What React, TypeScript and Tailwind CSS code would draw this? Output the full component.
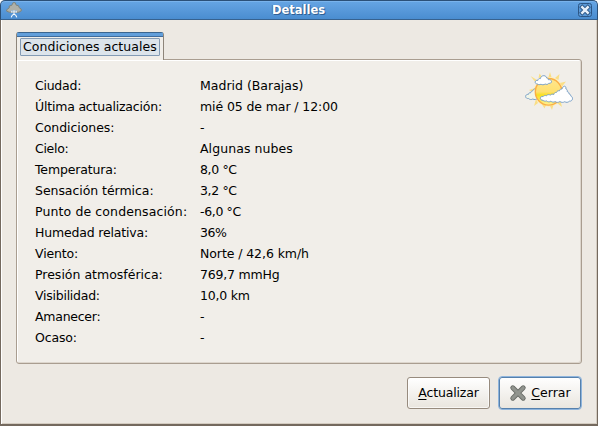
import React from "react";

type Detail = {
  label: string;
  value: string;
  labelClass?: string;
  valueClass?: string;
};

const details: Detail[] = [
  { label: "Ciudad:", value: "Madrid (Barajas)", labelClass: "tracking-[-0.25px]" },
  { label: "Última actualización:", value: "mié 05 de mar / 12:00", labelClass: "tracking-[-0.2px]", valueClass: "tracking-[-0.1px]" },
  { label: "Condiciones:", value: "-", labelClass: "tracking-[-0.05px]" },
  { label: "Cielo:", value: "Algunas nubes", labelClass: "tracking-[-0.3px]", valueClass: "tracking-[0.07px]" },
  { label: "Temperatura:", value: "8,0 °C", labelClass: "tracking-[-0.15px]", valueClass: "tracking-[-0.35px]" },
  { label: "Sensación térmica:", value: "3,2 °C", labelClass: "tracking-[-0.05px]", valueClass: "tracking-[-0.35px]" },
  { label: "Punto de condensación:", value: "-6,0 °C", labelClass: "tracking-[0.12px]", valueClass: "tracking-[-0.35px]" },
  { label: "Humedad relativa:", value: "36%", labelClass: "tracking-[-0.17px]", valueClass: "tracking-[-0.4px]" },
  { label: "Viento:", value: "Norte / 42,6 km/h", labelClass: "tracking-[-0.15px]", valueClass: "tracking-[-0.08px]" },
  { label: "Presión atmosférica:", value: "769,7 mmHg" , valueClass: "tracking-[-0.2px]" },
  { label: "Visibilidad:", value: "10,0 km", labelClass: "tracking-[-0.25px]", valueClass: "tracking-[-0.2px]" },
  { label: "Amanecer:", value: "-", labelClass: "tracking-[-0.25px]" },
  { label: "Ocaso:", value: "-", labelClass: "tracking-[-0.15px]" },
];

function AppIcon() {
  return (
    <svg width="16" height="16" viewBox="0 0 16 16" className="block">
      <path
        d="M7 .7h2.2l1 2.5 2.3.5.7 2 2 1.3v2l-2.4 1.2H3.200L.7 9.200V7.700L3.200 6V4l2.600-.7z"
        fill="#aeb0a8"
        stroke="#7e857f"
        strokeWidth="1"
      />
      <path d="M4.500 8.300h7l-1 1.900h-5z" fill="#9dbbd6" />
      <path d="M8 8.500v4M5 9.700l1.500.6M11 9.700l-1.500.6M8 12.300c-1.500.2-2.300 1.200-2.800 3M8 12.300c1.500.2 2.300 1.200 2.800 3" fill="none" stroke="#fff" strokeWidth="1.100" />
    </svg>
  );
}

function CloseGlyph() {
  return (
    <svg width="14" height="14" viewBox="0 0 14 14" className="block">
      <rect x=".5" y=".5" width="13" height="13" rx="2" fill="#5a98d6" stroke="#2c5787" />
      <path d="M4.300 4.300l5.400 5.400M9.700 4.300L4.300 9.700" stroke="#2c5787" strokeWidth="4.400" strokeLinecap="square" />
      <path d="M4.300 4.300l5.400 5.400M9.700 4.300L4.300 9.700" stroke="#e6effa" strokeWidth="2.500" strokeLinecap="square" />
    </svg>
  );
}

function WeatherIcon() {
  return (
    <svg width="48" height="38" viewBox="0 0 48 38" className="block">
      <defs>
        <linearGradient id="sun" x1="0" y1="0" x2="0" y2="1">
          <stop offset="0" stopColor="#ffe690" />
          <stop offset=".5" stopColor="#ffe070" />
          <stop offset=".62" stopColor="#f8e020" />
          <stop offset="1" stopColor="#fff29a" />
        </linearGradient>
      </defs>
      <circle cx="23.700" cy="19.700" r="15" fill="#fdf0bd" />
      <path
        d="M23.500 5l1.500-5 1.500 5zM30 6l4.500-4-1 6zM35 11l6-1.500-4 5zM12 8L5.500 4 11 11zM13.500 6l1-4.500 3 4zM9 21l-5-3 6-2zM13 31l-4 3 2-7zM21 33l-1.500 3.500-3-5zM25 34l2 4 1.500-5zM32 31l5 4-1.500-6z"
        fill="#fadf86"
      />
      <path
        d="M12 18c-1.500-1.800-3.700-1.300-4.200.8-1.500.2-2 1-2.100 2-1.500-.3-2.200.5-2.200 1.500C1.500 22.300.6 23.200.6 24.500c0 1.400 1.400 2.200 3 2 1.200 1.300 3 1.300 4.200.5 1.500 1 3.500.6 4.700-.6z"
        fill="#f2f6e8"
        stroke="#7ca2c8"
        strokeWidth="1"
      />
      <circle cx="23.600" cy="19.800" r="13.300" fill="url(#sun)" stroke="#fbae45" strokeWidth="1.400" />
      <path
        d="M12.500 12c-1.500 0-2.400-.8-2.300-2 .1-1.200 1.300-1.900 2.700-1.600.1-1.400 1.300-2.100 2.500-1.800.4-2 1.800-3 3.500-2.900 1.600.1 2.500 1 2.700 2.300 1.200 0 1.800.7 1.700 1.700 1.700-.3 3.100.4 3.200 1.700.1 1.400-1.200 2.200-2.700 1.900-.8 1.300-2.500 1.400-3.600.7-1.400 1-3.200 1-4.200.2-1.300.7-2.700.6-3.500-.2z"
        fill="#fff"
        stroke="#7ca2c8"
        strokeWidth="1"
      />
      <path
        d="M18 28.300c-1.600 0-2.800-.9-2.700-2.200.1-1.200 1.400-1.800 2.800-1.500.8-1.200 2.300-1.300 3.200-.8 1-1.400 2.900-1.400 4-.7 1.100-1.200 2.500-1.100 3.500-.6.300-1.500 1.300-2.200 2.700-2.100.5-1.400 1.700-1.900 3-1.600.3-1.500 1.400-2 2.500-1.700.4-1.700 1.500-3 2.600-2.900 1.200.1 1.500 1.500 1.300 2.800 1.300.3 1.600 1.600 1.300 2.600 1.400.2 2 1.200 1.800 2.400 1.300 0 1.900 1 1.700 2 1.200.4 1.900 1.500 1.800 2.800-.1 1.600-1.600 2.600-3.200 2.400-1.200 1.400-3.200 1.500-4.500.5-1.600 1-3.600.9-4.900-.2-1.400 1.200-3.500 1.100-4.600.1-1.600.9-3.400.6-4.400-.4-1.500 1-3.300.8-4.200-.3-1.300.5-2.700.3-3.700-.6z"
        fill="#fff"
        stroke="#7ca2c8"
        strokeWidth="1"
      />
    </svg>
  );
}

function StopIcon() {
  return (
    <svg width="18" height="18" viewBox="0 0 18 18" className="block">
      <path d="M3.800 3.800l10.400 10.400M14.200 3.800L3.800 14.200" stroke="#686b66" strokeWidth="5" strokeLinecap="round" />
      <path d="M3.800 3.800l10.400 10.400M14.200 3.800L3.800 14.200" stroke="#91948e" strokeWidth="3.200" strokeLinecap="round" />
    </svg>
  );
}

export default function App() {
  return (
    <div className="flex h-[426px] w-[598px] flex-col bg-white font-['DejaVu_Sans',sans-serif] text-[12.5px] text-black">
      <header className="flex h-5 shrink-0 items-center justify-between rounded-t-[5px] border border-[#2b5078] border-b-[#37628f] bg-linear-to-b from-[#66a5e4] to-[#4a8dd0] pr-[5px] pl-[5px] shadow-[inset_0_1px_0_#79b3ec]">
        <AppIcon />
        <h1 className="mr-[3px] text-[11.5px] leading-[18px] font-bold text-white [text-shadow:1px_1px_0_#2f5f94,-1px_0_0_#3f72aa]">Detalles</h1>
        <CloseGlyph />
      </header>
      <main className="flex flex-1 flex-col border-x border-b-2 border-[#74695e] bg-[#ede9e3] px-[15px] pt-3 shadow-[inset_1px_0_0_#fff,inset_-1px_-1px_0_#d4ccc1]">
        <div className="relative -mb-px h-7 w-[148px] rounded-t-[3px] border border-b-0 border-[#8e857a] border-t-[#3b668f] bg-[#f1eee9]">
          <div className="h-[3px] bg-[#629fdb]" />
          <div className="h-px bg-[#3f6c9c]" />
          <div className="mx-[3px] mt-px flex h-[18px] items-center justify-center rounded-[1px] border border-[#839bb5] bg-[#dce4eb] tracking-[0.07px] whitespace-nowrap">
            Condiciones actuales
          </div>
        </div>
        <section className="flex h-[305px] w-[566px] justify-between rounded-[3px] rounded-tl-none border border-[#a99d90] bg-[#f1eee9] pt-[15px] pr-2 pl-[18px] shadow-[inset_1px_1px_0_#fff,inset_-1px_-1px_0_#ddd6cd]">
          <dl className="grid auto-rows-[21px] grid-cols-[165px_200px] leading-[21px] whitespace-nowrap">
            {details.map((row) => (
              <React.Fragment key={row.label}>
                <dt className={row.labelClass}>{row.label}</dt>
                <dd className={row.valueClass}>{row.value}</dd>
              </React.Fragment>
            ))}
          </dl>
          <div className="-mt-[3px]">
            <WeatherIcon />
          </div>
        </section>
        <div className="mt-3 flex gap-2">
          <button className="mt-px ml-[391px] h-8 w-[83px] rounded-[3px] border border-[#978b7e] bg-linear-to-b from-white to-[#e9e5de] tracking-[-0.15px] shadow-[inset_0_0_0_1px_#ffffffaa]">
            <span className="underline underline-offset-2">A</span>ctualizar
          </button>
          <button className="flex h-[34px] w-[84px] shrink-0 items-center justify-center gap-1 rounded-[4px] border border-[#8eb4dc] bg-linear-to-b from-white to-[#e9e5de] shadow-[inset_0_0_0_1px_#5680ac]">
            <StopIcon />
            <span>
              <span className="underline underline-offset-2">C</span>errar
            </span>
          </button>
        </div>
      </main>
    </div>
  );
}
